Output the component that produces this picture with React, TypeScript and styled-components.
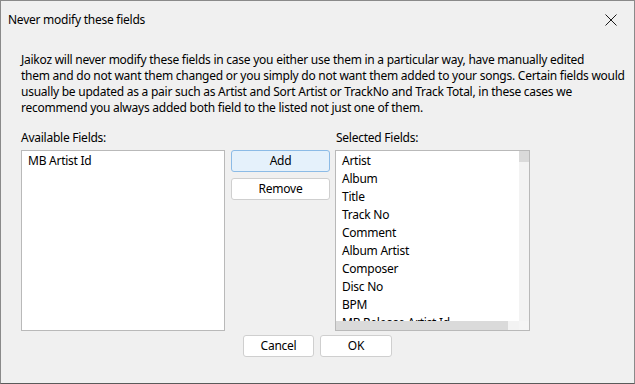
import React from 'react'
import styled, { createGlobalStyle } from 'styled-components'

const GlobalStyle = createGlobalStyle`
  html, body {
    margin: 0;
    padding: 0;
    background: #f0f0f0;
  }
  body {
    font-family: 'Noto Sans', 'Open Sans', sans-serif;
    font-size: 12px;
    letter-spacing: -0.25px;
    color: #000;
  }
`

const Frame = styled.div`
  box-sizing: border-box;
  width: 635px;
  height: 384px;
  border: 1px solid #8a8a8a;
  border-bottom-color: #5a5a5a;
  background: #f0f0f0;
  display: flex;
  flex-direction: column;
`

const TitleBar = styled.div`
  height: 37px;
  display: flex;
  align-items: center;
  justify-content: space-between;
  padding: 0 16px 0 7px;
`

const Title = styled.span`
  font-size: 12px;
  line-height: 16px;
  white-space: nowrap;
`

const CloseButton = styled.button`
  width: 14px;
  height: 14px;
  padding: 0;
  border: 0;
  background: transparent;
  display: flex;
  align-items: center;
  justify-content: center;
`

const Content = styled.div`
  padding: 14px 20px 0 20px;
  display: flex;
  flex-direction: column;
`

const Description = styled.p`
  margin: 0;
  line-height: 16px;
  white-space: nowrap;
`

const FieldsGrid = styled.div`
  margin-top: 14px;
  display: grid;
  grid-template-columns: 204px 98px 195px;
  grid-template-rows: 15px 181px;
  column-gap: 6px;
  row-gap: 5px;
`

const Label = styled.div<{ $col: number }>`
  grid-column: ${({ $col }) => $col};
  line-height: 15px;
  padding-left: ${({ $col }) => ($col === 3 ? 1 : 0)}px;
  white-space: nowrap;
`

const ListBox = styled.div`
  box-sizing: border-box;
  border: 1px solid #b9b9b9;
  background: #fff;
  overflow: hidden;
`

const ScrollListBox = styled(ListBox)`
  display: grid;
  grid-template-columns: minmax(0, 1fr) 10px;
  grid-template-rows: minmax(0, 1fr) 9px;
`

const Items = styled.div`
  padding: 1px 0 0 6px;
  overflow: hidden;
`

const Item = styled.div`
  height: 18px;
  line-height: 18px;
  white-space: nowrap;
`

const VTrack = styled.div`
  background: #f3f3f3;
  display: flex;
  flex-direction: column;
`

const VThumb = styled.div`
  height: 11px;
  background: #dadada;
`

const HTrack = styled.div`
  background: #f3f3f3;
  display: flex;
`

const HThumb = styled.div`
  width: 172px;
  background: #dadada;
`

const Corner = styled.div`
  background: #f5f5f5;
`

const ButtonColumn = styled.div`
  width: 99px;
  display: flex;
  flex-direction: column;
  gap: 6px;
`

const Button = styled.button<{ $focused?: boolean; $width?: number }>`
  box-sizing: border-box;
  width: ${({ $width }) => ($width ? `${$width}px` : '100%')};
  height: 22px;
  padding: 0;
  font-family: inherit;
  font-size: 12px;
  line-height: 16px;
  letter-spacing: inherit;
  color: #000;
  border-radius: 3px;
  border: 1px solid ${({ $focused }) => ($focused ? '#8cbbe6' : '#cfcfcf')};
  background: ${({ $focused }) => ($focused ? '#e5f1fb' : '#fff')};
`

const Footer = styled.div`
  margin-top: 4px;
  display: flex;
  justify-content: center;
  gap: 6px;
`

const selectedFields = [
  'Artist',
  'Album',
  'Title',
  'Track No',
  'Comment',
  'Album Artist',
  'Composer',
  'Disc No',
  'BPM',
  'MB Release Artist Id'
]

export default function App() {
  return (
    <>
      <GlobalStyle />
      <Frame>
        <TitleBar>
          <Title>Never modify these fields</Title>
          <CloseButton aria-label="Close">
            <svg width="12" height="12" viewBox="0 0 12 12">
              <path d="M0.5 0.5L11.5 11.5M11.5 0.5L0.5 11.5" stroke="#1a1a1a" strokeWidth="1" />
            </svg>
          </CloseButton>
        </TitleBar>
        <Content>
          <Description>
            Jaikoz will never modify these fields in case you either use them in a particular way, have manually edited
            <br />
            them and do not want them changed or you simply do not want them added to your songs. Certain fields would
            <br />
            usually be updated as a pair such as Artist and Sort Artist or TrackNo and Track Total, in these cases we
            <br />
            recommend you always added both field to the listed not just one of them.
          </Description>
          <FieldsGrid>
            <Label $col={1}>Available Fields:</Label>
            <Label $col={3}>Selected Fields:</Label>
            <ListBox>
              <Items>
                <Item>MB Artist Id</Item>
              </Items>
            </ListBox>
            <ButtonColumn>
              <Button $focused>Add</Button>
              <Button>Remove</Button>
            </ButtonColumn>
            <ScrollListBox>
              <Items>
                {selectedFields.map((f) => (
                  <Item key={f}>{f}</Item>
                ))}
              </Items>
              <VTrack>
                <VThumb />
              </VTrack>
              <HTrack>
                <HThumb />
              </HTrack>
              <Corner />
            </ScrollListBox>
          </FieldsGrid>
          <Footer>
            <Button $width={71}>Cancel</Button>
            <Button $width={72}>OK</Button>
          </Footer>
        </Content>
      </Frame>
    </>
  )
}
